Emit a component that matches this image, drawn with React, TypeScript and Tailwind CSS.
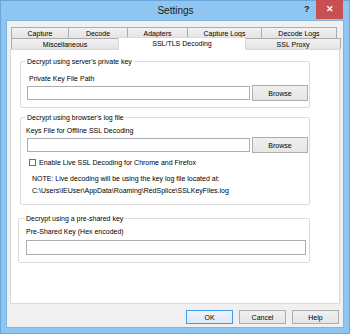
import React from "react";

// ─── data ─────────────────────────────────────────────────────────────────────

const TOP_TABS = [
  { label: "Capture", w: "w-[58px]" },
  { label: "Decode", w: "w-[60px]" },
  { label: "Adapters", w: "w-[61px]" },
  { label: "Capture Logs", w: "w-[75px]" },
  { label: "Decode Logs", w: "w-[76px]" },
];

const FONT = { fontFamily: '"Liberation Sans", Arial, sans-serif' };

// ─── small pieces ─────────────────────────────────────────────────────────────

function Tab({ label, w }: { label: string; w: string }) {
  return (
    <div
      className={`${w} h-full flex items-center justify-center border-t border-l border-r border-[#acacac] bg-gradient-to-b from-[#f2f2f2] to-[#e3e3e3] text-[7px] leading-none text-black -mr-[1px]`}
    >
      {label}
    </div>
  );
}

function BrowseButton() {
  return (
    <button className="w-[56px] h-[16px] shrink-0 flex items-center justify-center border border-[#adadad] bg-gradient-to-b from-[#f0f0f0] to-[#e5e5e5] text-[7px] leading-none text-black">
      Browse
    </button>
  );
}

function TextBox({ className }: { className: string }) {
  return <div className={`${className} bg-white border border-[#abadb3]`} />;
}

// ─── component ────────────────────────────────────────────────────────────────

export default function App() {
  return (
    <div
      className="w-[350px] h-[334px] flex flex-col bg-[#8ec5f1] border border-[#6aa6dc] text-black"
      style={FONT}
    >
      {/* Title bar */}
      <div className="h-[19px] flex items-start shrink-0">
        <div className="flex-1 pl-[46px] pt-[4px] text-center text-[10px] leading-[11px] text-[#202020]">
          Settings
        </div>
        <span className="w-[12px] pt-[3px] text-[9px] font-bold leading-[10px] text-[#222]">
          ?
        </span>
        <div className="w-[27px] h-[19px] mr-[6px] -mt-[1px] flex items-center justify-center bg-[#c75050] text-white text-[9px] font-bold leading-none">
          ✕
        </div>
      </div>

      {/* Client */}
      <div className="flex-1 mx-[5px] mb-[5px] flex flex-col bg-[#f0f0f0] border border-[#7fb3e0]">
        {/* Tabs */}
        <div className="ml-[3px] mr-[3px] mt-[6px] flex flex-col">
          <div className="h-[11px] flex pl-[1px]">
            {TOP_TABS.map((t) => (
              <Tab key={t.label} label={t.label} w={t.w} />
            ))}
          </div>
          <div className="h-[11px] flex items-end pl-[1px]">
            <Tab label="Miscellaneous" w="w-[108px]" />
            <div className="w-[128px] h-[13px] -mb-[1px] -mr-[1px] relative z-10 flex items-start justify-center pt-[2px] border-t border-l border-r border-[#d9d9d9] bg-white text-[7px] leading-none">
              SSL/TLS Decoding
            </div>
            <Tab label="SSL Proxy" w="w-[96px]" />
          </div>

          {/* Panel */}
          <div className="h-[255px] flex flex-col bg-white border border-[#d9d9d9] text-[7px] leading-[9px]">
            {/* Group 1 */}
            <fieldset className="mt-[7px] ml-[9px] mr-[30px] pl-[6px] pr-[1px] pb-[6px] border border-[#dcdcdc] rounded-[2px]">
              <legend className="-ml-[1px] px-[1px]">
                Decrypt using server's private key
              </legend>
              <div className="mt-[8px] ml-[2px]">Private Key File Path</div>
              <div className="mt-[2px] flex items-center gap-[2px]">
                <TextBox className="w-[223px] h-[14px]" />
                <BrowseButton />
              </div>
            </fieldset>

            {/* Group 2 */}
            <fieldset className="mt-[5px] ml-[9px] mr-[30px] pl-[6px] pr-[1px] pb-[9px] border border-[#dcdcdc] rounded-[2px]">
              <legend className="-ml-[1px] px-[1px]">
                Decrypt using browser's log file
              </legend>
              <div className="mt-[4px] -ml-[1px]">
                Keys File for Offline SSL Decoding
              </div>
              <div className="mt-[2px] flex items-center gap-[2px]">
                <TextBox className="w-[223px] h-[14px]" />
                <BrowseButton />
              </div>
              <div className="mt-[5px] ml-[2px] flex items-center gap-[3px]">
                <span className="w-[7px] h-[7px] border border-[#707070] bg-white" />
                <span>Enable Live SSL Decoding for Chrome and Firefox</span>
              </div>
              <div className="mt-[7px] ml-[5px]">
                NOTE: Live decoding will be using the key log file located at:
              </div>
              <div className="mt-[3px] ml-[5px]">
                C:\Users\IEUser\AppData\Roaming\RedSplice\SSLKeyFiles.log
              </div>
            </fieldset>

            {/* Group 3 */}
            <fieldset className="mt-[9px] ml-[7px] mr-[30px] pl-[7px] pr-[3px] pb-[7px] border border-[#dcdcdc] rounded-[2px]">
              <legend className="-ml-[1px] px-[1px]">
                Decrypt using a pre-shared key
              </legend>
              <div className="mt-[4px]">Pre-Shared Key (Hex encoded)</div>
              <TextBox className="mt-[4px] w-[280px] h-[15px]" />
            </fieldset>
          </div>
        </div>

        {/* Buttons */}
        <div className="mt-[6px] mr-[4px] flex justify-end gap-[6px] text-[7px] leading-none">
          <button className="w-[47px] h-[14px] flex items-center justify-center border border-[#3c9cf0] bg-gradient-to-b from-[#eef4fb] to-[#dfe9f5]">
            OK
          </button>
          <button className="w-[47px] h-[14px] flex items-center justify-center border border-[#adadad] bg-gradient-to-b from-[#f0f0f0] to-[#e5e5e5]">
            Cancel
          </button>
          <button className="w-[47px] h-[14px] flex items-center justify-center border border-[#adadad] bg-gradient-to-b from-[#f0f0f0] to-[#e5e5e5]">
            Help
          </button>
        </div>
      </div>
    </div>
  );
}
